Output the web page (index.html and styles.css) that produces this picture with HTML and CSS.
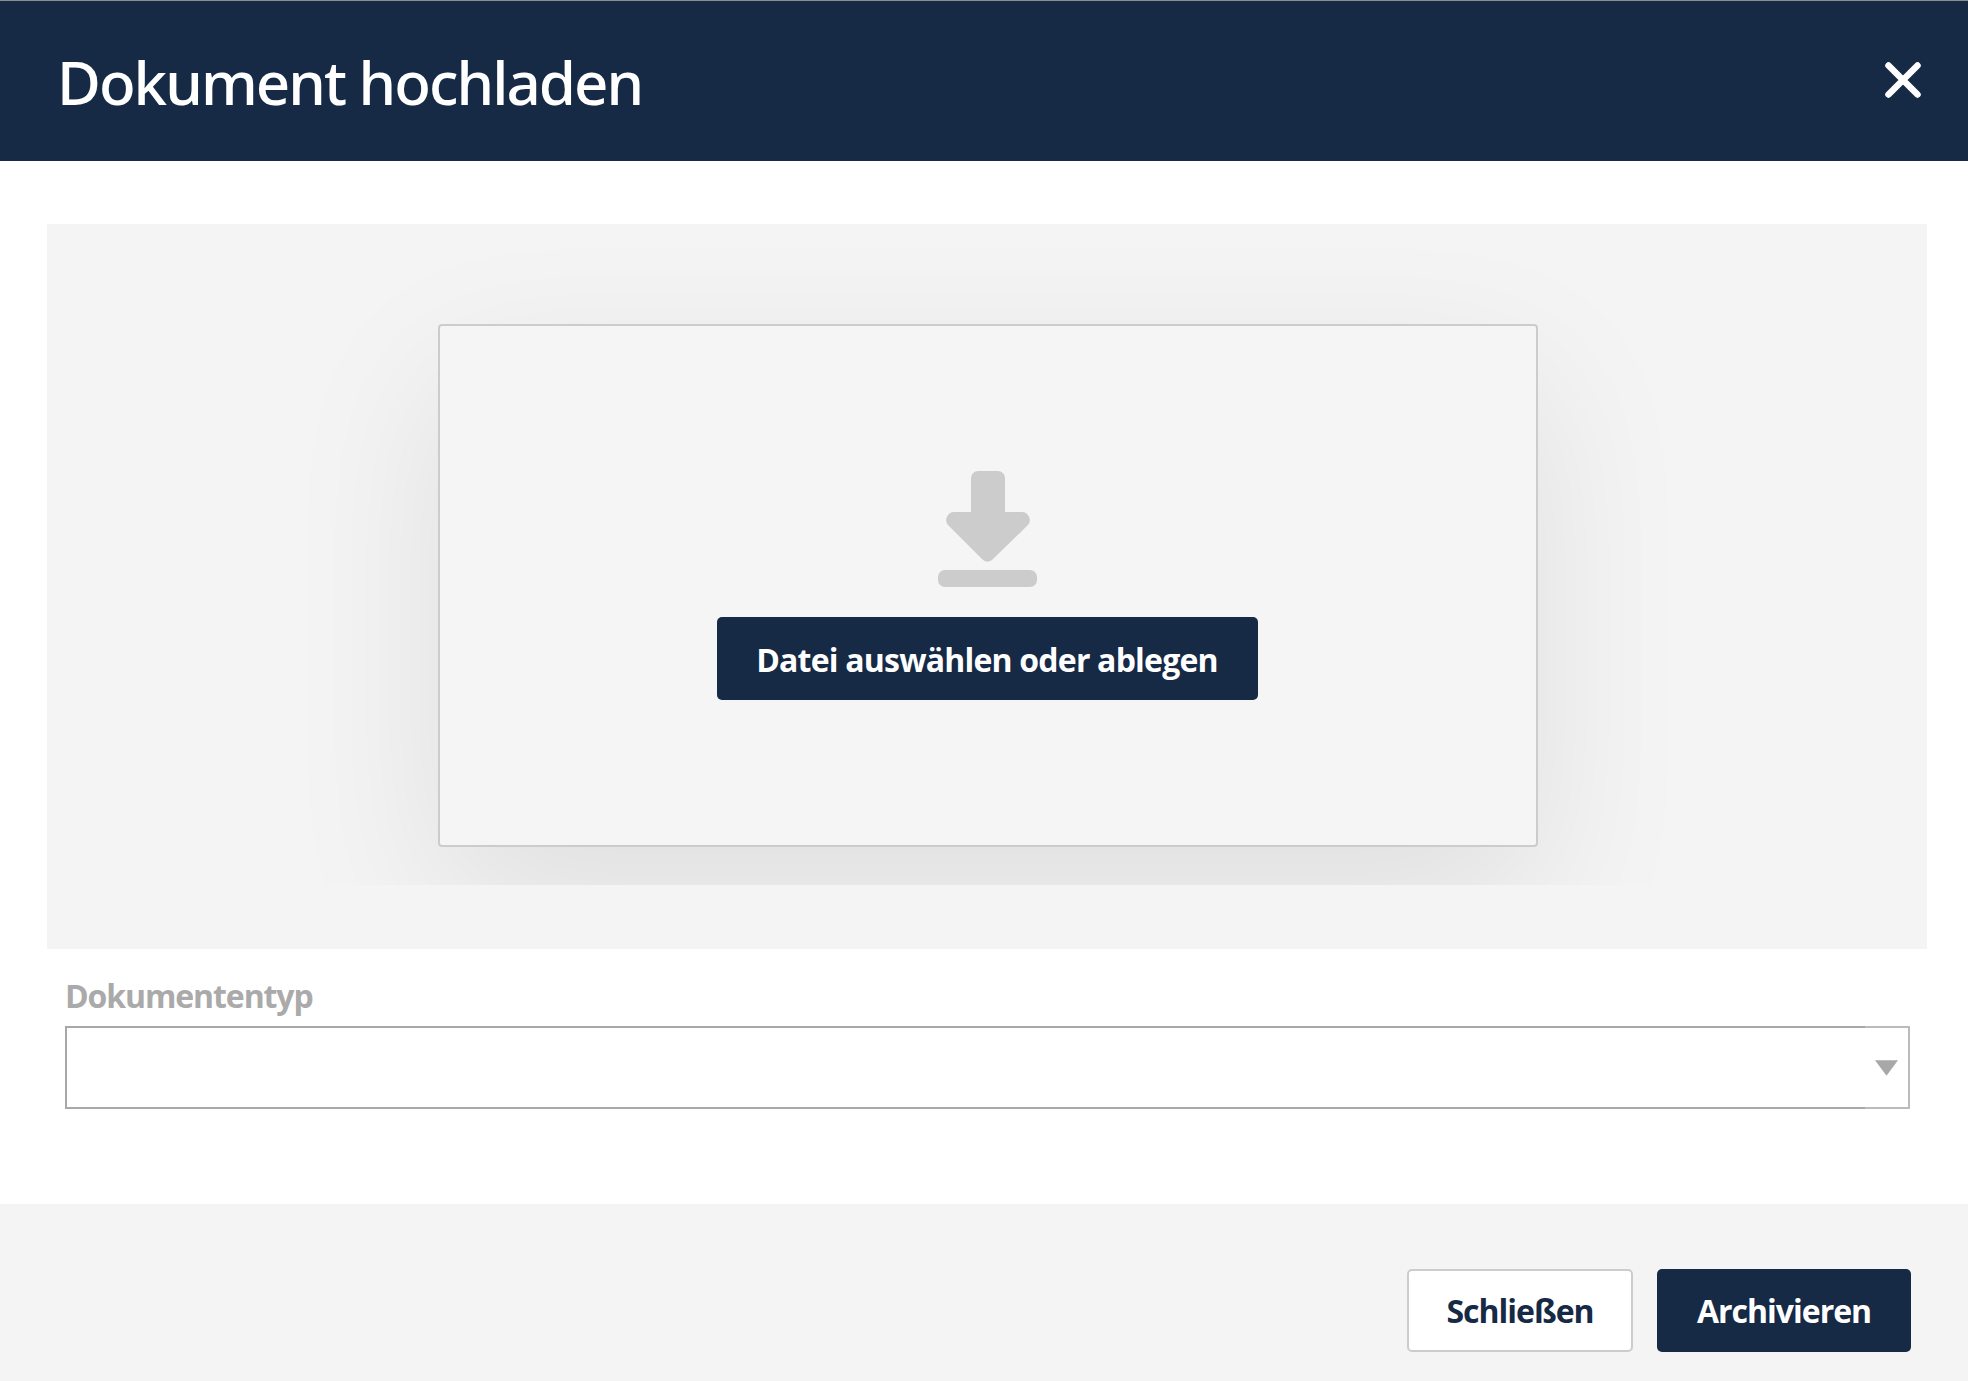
FILE: index.html
```html
<!DOCTYPE html>
<html lang="de">
  <head>
    <meta charset="UTF-8" />
    <meta name="viewport" content="width=device-width, initial-scale=1.0" />
    <title>Dokument hochladen</title>
    <link rel="stylesheet" href="styles.css">
  </head>
  <body>
    <section class="dialog">
      <header class="dialog-header">
        <h1 class="dialog-title">Dokument hochladen</h1>
        <svg class="close-icon" viewBox="0 0 36 36" aria-label="Schließen">
          <path d="M3.500 3.500 32.500 32.500M32.500 3.500 3.500 32.500" />
        </svg>
      </header>

      <main class="dialog-body">
        <div class="upload-panel">
          <div class="drop-clip">
            <div class="drop-zone">
              <svg class="upload-icon" viewBox="0 0 100 116">
                <path d="M40 0h20a7 7 0 0 1 7 7v34h17a8 8 0 0 1 6 13L55 88a7 7 0 0 1-11 0L10 54a8 8 0 0 1 6-13h17V7a7 7 0 0 1 7-7z" />
                <rect x="0" y="99" width="99" height="17" rx="7" />
              </svg>
              <button class="btn btn-primary btn-upload">Datei auswählen oder ablegen</button>
            </div>
          </div>
        </div>

        <div class="field">
          <label class="field-label">Dokumententyp</label>
          <div class="select">
            <div class="select-value"></div>
            <div class="select-toggle">
              <svg class="select-arrow" viewBox="0 0 24 16">
                <path d="M0 0H24L12 16z" />
              </svg>
            </div>
          </div>
        </div>
      </main>

      <footer class="dialog-footer">
        <button class="btn btn-secondary">Schließen</button>
        <button class="btn btn-primary btn-archive">Archivieren</button>
      </footer>
    </section>
  </body>
</html>
```

FILE: styles.css
```css
html,
body {
  padding: 0;
  margin: 0;
  height: 100%;
  background-color: #fff;
}

body {
  font-family: "Open Sans", "Noto Sans", sans-serif;
}

.dialog {
  display: flex;
  flex-direction: column;
  height: 1381px;
  overflow: hidden;
}

.dialog-header {
  display: flex;
  align-items: center;
  justify-content: space-between;
  box-sizing: border-box;
  height: 161px;
  padding: 0 47px 0 57px;
  background-color: #162a46;
  border-top: 1px solid #8f8f8f;
}

.dialog-title {
  margin: 2px 0 0;
  font-family: "Noto Sans", "Open Sans", sans-serif;
  font-size: 60px;
  font-weight: 500;
  line-height: 1.2;
  letter-spacing: -1.95px;
  color: #fff;
}

.close-icon {
  width: 36px;
  height: 36px;
  margin-top: -2px;
}

.close-icon path {
  fill: none;
  stroke: #fff;
  stroke-width: 6.5;
  stroke-linecap: round;
}

.dialog-body {
  flex: 1;
  padding: 63px 41px 0 47px;
}

.upload-panel {
  height: 725px;
  background-color: #f4f4f4;
}

/* the shadow of the drop zone is cut off below the box */
.drop-clip {
  display: flex;
  justify-content: center;
  box-sizing: border-box;
  height: 661px;
  padding: 100px 0 0 2px;
  overflow: hidden;
}

.drop-zone {
  display: flex;
  flex-direction: column;
  align-items: center;
  justify-content: center;
  box-sizing: border-box;
  width: 1100px;
  height: 523px;
  background-color: #f5f5f5;
  border: 2px solid #ccc;
  border-radius: 4px;
  box-shadow: 0 55px 160px rgba(0, 0, 0, 0.085);
}

.upload-icon {
  width: 100px;
  height: 116px;
  margin-bottom: 30px;
  fill: #ccc;
}

.btn {
  box-sizing: border-box;
  height: 83px;
  padding: 0;
  font-family: inherit;
  font-size: 32px;
  font-weight: 700;
  letter-spacing: -1px;
  border-radius: 5px;
  border: 0;
}

.btn-primary {
  background-color: #162a46;
  color: #fff;
}

.btn-secondary {
  width: 226px;
  background-color: #fff;
  color: #162a46;
  border: 2px solid #ccc;
}

.btn-upload {
  width: 541px;
  margin-right: 2px;
  padding-top: 2px;
  letter-spacing: -0.8px;
}

.btn-archive {
  width: 254px;
}

.field {
  padding: 26px 17px 0 18px;
}

.field-label {
  display: block;
  height: 51px;
  font-size: 32px;
  font-weight: 700;
  line-height: 42px;
  letter-spacing: -1.1px;
  color: #aaa;
}

.select {
  display: flex;
  height: 83px;
}

.select-value {
  flex: 1;
  border: 2px solid #a8a8a8;
  border-right: 0;
}

.select-toggle {
  display: flex;
  align-items: center;
  justify-content: center;
  box-sizing: border-box;
  width: 45px;
  border: 2px solid #bbb;
  border-left: 0;
}

.select-arrow {
  width: 23px;
  height: 16px;
  fill: #a8a8a8;
}

.dialog-footer {
  display: flex;
  justify-content: flex-end;
  gap: 24px;
  box-sizing: border-box;
  height: 177px;
  padding: 65px 57px 0 0;
  background-color: #f4f4f4;
}
```
